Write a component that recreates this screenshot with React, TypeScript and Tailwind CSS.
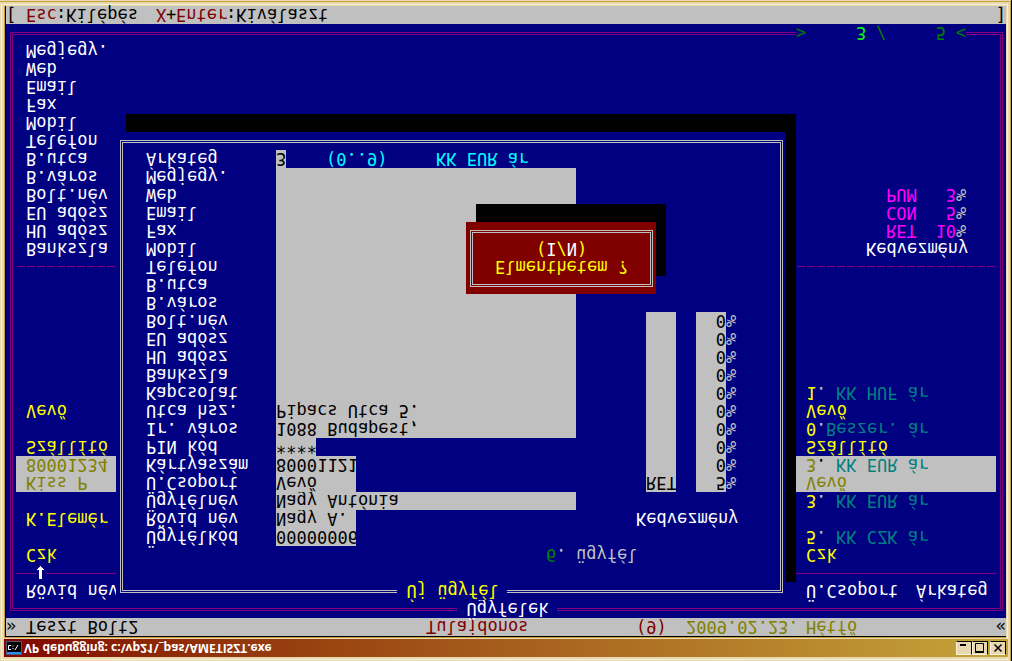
import { useId, type ReactNode } from 'react';

type Line = { name?: string; detail?: ReactNode; selected?: boolean };

const price = (code: string, label: string, selected = false) => (
  <span className="flex">
    <span className="w-[10px]">{code}</span>
    <span className={selected ? 'w-[20px] text-black' : 'w-[20px] text-[#c0c0c0]'}>.</span>
    <span className="text-[#008080]">{label}</span>
  </span>
);

const lines: Line[] = [
  { name: 'Czk', detail: 'Czk' },
  { detail: price('5', 'KK CZK ár') },
  { name: 'K.Elemér' },
  { detail: price('3', 'KK EUR ár') },
  { name: 'Kiss P', detail: 'Vevő', selected: true },
  { name: '80001234', detail: price('3', 'KK EUR ár', true), selected: true },
  { name: 'Szállító', detail: 'Szállító' },
  {
    detail: (
      <span className="flex">
        <span className="w-[10px]">0</span>
        <span className="w-[10px] text-[#c0c0c0]">.</span>
        <span className="text-[#008080]">Beszer. ár</span>
      </span>
    ),
  },
  { name: 'Vevő', detail: 'Vevő' },
  { detail: price('1', 'KK HUF ár') },
];

const detailLabels = [
  'Bankszla', 'HU adósz', 'EU adósz', 'Bolt.név', 'B.város', 'B.utca',
  'Telefon', 'Mobil', 'Fax', 'Email', 'Web', 'Megjegy.',
];

const groupDiscounts = [
  { group: 'RET', percent: '10' },
  { group: 'CON', percent: '5' },
  { group: 'PUM', percent: '3' },
];

const fields = [
  { label: 'Ügyfélkód', value: '00000006', width: 'w-[80px]' },
  { label: 'Rövid név', value: 'Nagy A.', width: 'w-[80px]' },
  { label: 'Ügyfélnév', value: 'Nagy Antónia', width: 'w-[300px]' },
  { label: 'Ü.Csoport', value: 'Vevő', width: 'w-[80px]' },
  { label: 'Kártyaszám', value: '80001121', width: 'w-[80px]' },
  { label: 'PIN kód', value: '****', width: 'w-[40px]' },
  { label: 'Ir. város', value: '1088 Budapest,', width: 'w-[300px]' },
  { label: 'Utca hsz.', value: 'Pipacs Utca 5.', width: 'w-[300px]' },
  { label: 'Kapcsolat', value: '', width: 'w-[300px]' },
  ...detailLabels.map((label) => ({ label, value: '', width: 'w-[300px]' })),
];

const discounts = ['5', '0', '0', '0', '0', '0', '0', '0', '0', '0'];

const inputClass = 'block h-[18px] shrink-0 bg-[#c0c0c0] p-0 leading-[18px] text-black outline-none';

function Field({ label, value, width, children }: { label: string; value: string; width: string; children?: ReactNode }) {
  const id = useId();
  return (
    <div className="flex h-[18px] whitespace-pre">
      <label htmlFor={id} className="w-[130px] shrink-0">{label}</label>
      <input id={id} defaultValue={value} className={`${inputClass} ${width}`} />
      {children}
    </div>
  );
}

function TitleBar() {
  const button = 'flex h-[14px] w-[16px] items-center justify-center border border-t-[#fbf5e0] border-l-[#fbf5e0] border-r-black border-b-black bg-[#e7d8b0]';
  return (
    <header className="flex h-[18px] items-center bg-linear-to-r from-[#800000] to-[#c4a53a] pr-[2px] pl-[2px]">
      <svg viewBox="0 0 16 14" className="h-[14px] w-[16px] shrink-0" aria-hidden="true">
        <rect width="16" height="14" fill="#4a5a78" />
        <rect x="1" y="1" width="14" height="2" fill="#2a8cf0" />
        <rect x="1" y="3" width="14" height="10" fill="#000" />
        <path d="M5 5.500H2.500V9.500H5M7 6v1M7 8.500v1M9 5l3 5" stroke="#fff" fill="none" />
      </svg>
      <h1 className="flex-1 pl-[2px] font-['Open_Sans'] text-[12px] leading-[18px] font-bold whitespace-pre text-white">
        VP debugging: c:\vp21\_pas\AMETISZT.exe
      </h1>
      <div className="flex">
        <button type="button" aria-label="Minimize" className={button}>
          <svg viewBox="0 0 14 12" className="h-[12px] w-[14px]"><path d="M3 9h6" stroke="#000" strokeWidth="2" /></svg>
        </button>
        <button type="button" aria-label="Maximize" className={button}>
          <svg viewBox="0 0 14 12" className="h-[12px] w-[14px]">
            <path d="M2.500 2v8.500h8V2" stroke="#000" fill="none" />
            <path d="M2 2h9" stroke="#000" strokeWidth="2" />
          </svg>
        </button>
        <button type="button" aria-label="Close" className={`${button} ml-[2px]`}>
          <svg viewBox="0 0 14 12" className="h-[12px] w-[14px]"><path d="M3.500 2.500l7 7M10.500 2.500l-7 7" stroke="#000" strokeWidth="1.500" /></svg>
        </button>
      </div>
    </header>
  );
}

function CustomerList() {
  return (
    <section className="pt-[7px] pr-[3px] pb-[8px] pl-[4px]">
      <div className="relative border-3 border-double border-[#800080] pt-[8px] pr-[4px] pb-[7px] pl-[3px]">
        <h2 className="absolute -top-[10px] left-1/2 w-[100px] -translate-x-1/2 bg-[#000080] pl-[10px]">Ügyfelek</h2>
        <table className="w-full table-fixed border-collapse text-left">
          <thead>
            <tr className="h-[18px]">
              <th className="p-0 pl-[10px] font-normal">Rövid név</th>
              <th className="w-[200px] p-0 pl-[10px] font-normal">
                <span className="flex"><span className="w-[110px]">Ü.Csoport</span>Árkateg</span>
              </th>
            </tr>
          </thead>
          <tbody className="text-[#ffff00]">
            <tr className="h-[18px]">
              <td colSpan={2} className="p-0">
                <div className="flex h-[18px] items-start">
                  <span className="mt-[8px] h-px w-[20px] bg-[#800080]" />
                  <svg viewBox="0 0 10 18" className="h-[18px] w-[10px]" aria-hidden="true">
                    <path d="M3 3h3v9h2v1H7v1H6v1H5v1H4v-1H3v-1H2v-1H1v-1h2z" fill="#fff" />
                  </svg>
                  <span className="mt-[8px] h-px flex-1 bg-[#800080]" />
                </div>
              </td>
            </tr>
            {lines.map((line, i) => (
              <tr key={i} className={line.selected ? 'h-[18px] bg-[#c0c0c0] text-[#808000]' : 'h-[18px]'}>
                <td className="p-0 pl-[10px]">{line.name}</td>
                <td className="p-0 pl-[10px]">{line.detail}</td>
              </tr>
            ))}
          </tbody>
        </table>
        <div className="mt-[108px] flex h-[18px] items-center">
          <span className="h-px w-full bg-[repeating-linear-gradient(90deg,#000080_0_1px,#800080_1px_9px,#000080_9px_10px)]" />
        </div>
        <div className="flex justify-between">
          <ul className="pl-[10px]">
            {detailLabels.map((label) => <li key={label}>{label}</li>)}
          </ul>
          <table className="mr-[30px] w-[100px] table-fixed border-collapse self-start text-right text-[#ff00ff]">
            <colgroup>
              <col className="w-[60px]" />
              <col className="w-[30px]" />
              <col className="w-[10px]" />
            </colgroup>
            <thead>
              <tr className="h-[18px]">
                <th colSpan={3} className="p-0 text-left font-normal text-white">Kedvezmény</th>
              </tr>
            </thead>
            <tbody>
              {groupDiscounts.map((d) => (
                <tr key={d.group} className="h-[18px]">
                  <td className="p-0 pl-[20px] text-left">{d.group}</td>
                  <td className="p-0">{d.percent}</td>
                  <td className="p-0 text-left text-[#c0c0c0]">%</td>
                </tr>
              ))}
            </tbody>
          </table>
        </div>
        <p className="absolute right-[34px] -bottom-[11px] flex w-[170px] bg-[#000080] text-[#008000]">
          <span className="w-[60px]">&gt;</span>
          <span className="w-[20px] text-[#00ff00]">3</span>
          <span className="w-[60px]">/</span>
          <span className="w-[20px]">5</span>
          <span>&lt;</span>
        </p>
      </div>
    </section>
  );
}

function CustomerForm() {
  return (
    <form className="absolute top-[18px] right-[220px] left-[110px] bg-[#000080] pt-[7px] pr-[3px] pb-[8px] pl-[4px] shadow-[10px_18px_0_#000]">
      <div className="relative border-3 border-double border-[#c0c0c0] pt-[26px] pr-[4px] pb-[7px] pl-[23px]">
        <h2 className="absolute -top-[10px] left-1/2 w-[110px] -translate-x-1/2 bg-[#000080] pl-[10px] text-[#ffff00]">Új ügyfél</h2>
        <p className="flex justify-end pr-[140px] text-[#c0c0c0]">
          <span className="w-[10px] text-[#008000]">6</span>
          <span className="w-[20px]">.</span>
          <span className="w-[60px]">ügyfél</span>
        </p>
        <div className="flex">
          <div className="min-w-0 flex-1">
            {fields.map((field) => <Field key={field.label} {...field} />)}
            <Field label="Árkateg" value="3" width="w-[10px]">
              <span className="ml-[40px] w-[110px] shrink-0 text-[#00ffff]">(0..9)</span>
              <span className="text-[#00ffff]">KK EUR ár</span>
            </Field>
          </div>
          <section className="w-[140px] shrink-0 pt-[18px]">
            <h3>Kedvezmény</h3>
            <div className="pt-[18px] pl-[10px]">
              {discounts.map((percent, i) => (
                <div key={i} className="flex h-[18px] text-[#c0c0c0]">
                  <input aria-label={`Csoport ${i + 1}`} defaultValue={i === 0 ? 'RET' : ''} className={`${inputClass} mr-[20px] w-[30px]`} />
                  <input aria-label={`Kedvezmény ${i + 1}`} defaultValue={percent} className={`${inputClass} w-[30px] text-right`} />
                  <span>%</span>
                </div>
              ))}
            </div>
          </section>
        </div>
      </div>
    </form>
  );
}

function ConfirmDialog() {
  return (
    <div role="alertdialog" aria-label="Elmenthetem ?" className="absolute top-[324px] left-[460px] w-[190px] bg-[#800000] pt-[7px] pr-[3px] pb-[8px] pl-[4px] text-[#ffff00] shadow-[10px_18px_0_#000]">
      <div className="border-3 border-double border-[#c0c0c0] pt-[8px] pb-[7px] text-center">
        <p>Elmenthetem ?</p>
        <p className="flex justify-center">
          (<button type="button" className="text-white">I</button>/<button type="button" className="text-white">N</button>)
        </p>
      </div>
    </div>
  );
}

export default function App() {
  return (
    <div className="w-full -scale-y-100 border-r border-black bg-[#e7d8b0] pt-[4px] pr-[3px] pb-[6px] pl-[4px] shadow-[inset_0_-1px_0_#e7d8b0,inset_-1px_-2px_0_#c8a03c,inset_1px_1px_0_#e7d8b0,inset_-3px_-4px_0_#e7d8b0,inset_2px_2px_0_#f8f0d4,inset_-4px_-5px_0_#f8f0d4]">
      <TitleBar />
      <div className="mt-px mr-[2px] border-t border-l border-[#c8a03c]">
        <div className="border-t border-l border-black bg-[#000080] font-['DejaVu_Sans_Mono',monospace] text-[17px] leading-[18px] whitespace-pre text-white">
          <div className="flex h-[18px] bg-[#c0c0c0] text-black">
            <span className="w-[20px]">»</span>
            <span className="w-[400px]">Teszt Bolt2</span>
            <span className="w-[210px] text-[#800000]">Tulajdonos</span>
            <span className="w-[50px] text-[#800000]">(9)</span>
            <span className="w-[120px] text-[#808000]">2009.02.23.</span>
            <span className="flex-1 text-[#808000]">Hétfő</span>
            <span>«</span>
          </div>
          <main className="relative">
            <CustomerList />
            <CustomerForm />
            <ConfirmDialog />
          </main>
          <footer className="flex h-[18px] bg-[#c0c0c0] text-black">
            <span className="w-[20px]">[</span>
            <button type="button" className="flex w-[130px]"><span className="w-[30px] text-[#800000]">Esc</span>:Kilépés</button>
            <button type="button" className="flex">
              <span className="w-[10px] text-[#800000]">X</span>
              <span className="w-[10px]">+</span>
              <span className="w-[50px] text-[#800000]">Enter</span>
              :Kiválaszt
            </button>
            <span className="ml-auto">]</span>
          </footer>
        </div>
      </div>
    </div>
  );
}
